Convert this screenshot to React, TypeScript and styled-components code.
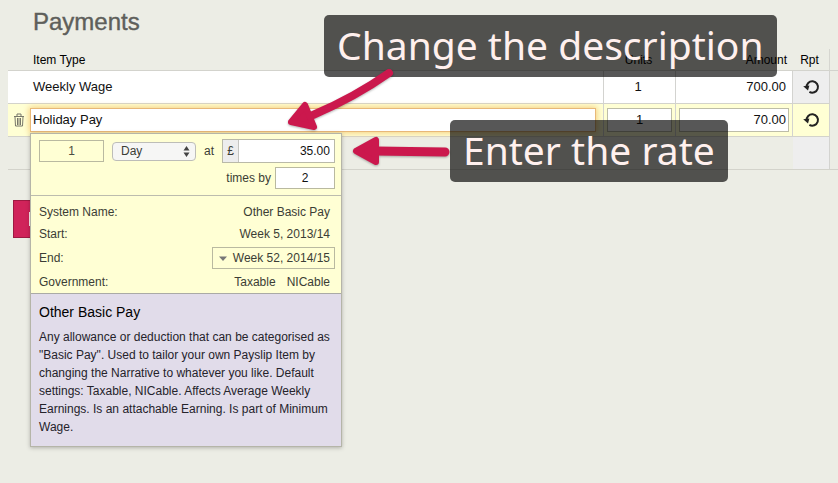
import React from 'react';
import styled, { createGlobalStyle } from 'styled-components';

const Global = createGlobalStyle`
  * { box-sizing: border-box; }
  body { margin: 0; background: #ecede5; color: #222; font-family: "Liberation Sans", Arial, sans-serif; font-size: 12px; }
  button, input, select { font: inherit; color: inherit; }
`;
const Page = styled.main`
  position: relative;
  min-height: 100vh;
  padding: 8px 0 0 8px;
  overflow: hidden;
`;
const Title = styled.h1`
  margin: 0 0 14px 25px;
  font-size: 24px;
  line-height: 27px;
  font-weight: 400;
  color: #5e5f5b;
  -webkit-text-stroke: 0.4px #5e5f5b;
`;
const Table = styled.table`
  width: 100%;
  table-layout: fixed;
  border-collapse: separate;
  border-spacing: 0;
  font-size: 13px;
  color: #111;
`;
const Col = styled.col<{ $w?: number }>`
  width: ${(p) => (p.$w ? `${p.$w}px` : 'auto')};
`;
const Th = styled.th<{ $align?: string; $edge?: boolean }>`
  height: 22px;
  padding: 0 6px 0 3px;
  font-size: 12px;
  font-weight: 400;
  color: #000;
  text-align: ${(p) => p.$align || 'left'};
  border-bottom: 1px solid #d3d3cd;
  border-right: ${(p) => (p.$edge ? '1px solid #d6d6d0' : '0')};
`;
const Row = styled.tr<{ $bg: string }>`
  background: ${(p) => p.$bg};
`;
const Td = styled.td<{ $align?: string; $line?: boolean; $bg?: string; $tight?: boolean }>`
  position: relative;
  height: 33px;
  padding: ${(p) => (p.$tight ? '0 3px' : '0 6px 2px 3px')};
  text-align: ${(p) => p.$align || 'left'};
  background: ${(p) => p.$bg || 'transparent'};
  border-bottom: 1px solid #d3d3cb;
  border-right: ${(p) => (p.$line ? '1px solid #d3d3d0' : '0')};
`;
const Outside = styled(Td)<{ $last?: boolean }>`
  background: #ecede5;
  border-bottom: ${(p) => (p.$last ? '1px solid #d3d3cb' : '0')};
`;
const ItemCell = styled(Td)`
  padding: 0 7px 0 0;
`;
const Field = styled.input<{ $align?: string; $focus?: boolean }>`
  display: block;
  width: 100%;
  height: 24px;
  padding: 0 2px 2px;
  text-align: ${(p) => p.$align || 'left'};
  background: #fff;
  border: 1px solid ${(p) => (p.$focus ? '#e8b878' : '#bdbda8')};
  box-shadow: ${(p) => (p.$focus ? '0 0 6px 1px #f5cf80' : 'none')};
  outline: 0;
`;
const IconButton = styled.button`
  display: flex;
  width: 100%;
  justify-content: center;
  padding: 0;
  border: 0;
  background: none;
`;
const Save = styled.button`
  display: flex;
  align-items: center;
  width: 80px;
  height: 38px;
  margin: 30px 0 0 5px;
  padding: 0 15px;
  border: 1px solid #9d1a42;
  background: #d0235a;
`;
const Panel = styled.section`
  position: absolute;
  top: 100%;
  left: 0;
  z-index: 2;
  width: 312px;
  margin-top: -3px;
  border: 1px solid #b5b5a8;
  background: #ffffd4;
  box-shadow: 0 1px 4px rgba(0, 0, 0, 0.25);
  font-size: 12px;
  color: #3b3d35;
  text-align: left;
`;
const RateForm = styled.div`
  display: flex;
  flex-direction: column;
  gap: 4px;
  padding: 5px 6px 6px 8px;
  border-bottom: 1px solid #bcbcae;
`;
const Line = styled.div<{ $end?: boolean }>`
  display: flex;
  align-items: center;
  justify-content: ${(p) => (p.$end ? 'flex-end' : 'space-between')};
  gap: 4px;
`;
const SmallField = styled.input<{ $w: number; $plain?: boolean }>`
  width: ${(p) => p.$w}px;
  height: 22px;
  padding: 0;
  text-align: center;
  border: 1px solid #b9b9a0;
  background: ${(p) => (p.$plain ? 'transparent' : '#fff')};
  color: ${(p) => (p.$plain ? '#4b4d42' : '#111')};
`;
const SelectBox = styled.div`
  position: relative;
  display: flex;
  width: 84px;
`;
const Select = styled.select`
  width: 100%;
  height: 19px;
  padding: 0 8px;
  appearance: none;
  border: 1px solid #bdbdb8;
  border-radius: 4px;
  background: #f6f6f5;
`;
const Carets = styled.svg`
  position: absolute;
  right: 6px;
  top: 4px;
  pointer-events: none;
`;
const Money = styled.div`
  display: flex;
  width: 113px;
  height: 24px;
  border: 1px solid #b9b9a8;
  background: #fff;
`;
const Currency = styled.span`
  flex: 0 0 16px;
  line-height: 22px;
  text-align: center;
  background: #ededed;
  border-right: 1px solid #c4c4c0;
`;
const MoneyInput = styled.input`
  min-width: 0;
  flex: 1;
  padding: 0 4px;
  border: 0;
  text-align: right;
  color: #111;
`;
const Details = styled.dl`
  margin: 0;
  padding: 5px 6px 0 8px;
  border-bottom: 1px solid #aaaaa6;
`;
const Detail = styled.div<{ $tall?: boolean }>`
  display: flex;
  align-items: center;
  justify-content: space-between;
  height: ${(p) => (p.$tall ? 26 : 22)}px;
`;
const Value = styled.dd`
  display: flex;
  gap: 11px;
  margin: 0;
  padding-right: 5px;
`;
const EndValue = styled.dd`
  margin: 0;
`;
const EndButton = styled.button`
  display: flex;
  align-items: center;
  gap: 6px;
  height: 22px;
  padding: 0 4px 0 6px;
  border: 1px solid #b9b9a0;
  background: transparent;
`;
const About = styled.div`
  padding: 9px 8px 10px;
  background: #e1dcea;
  color: #25232b;
`;
const AboutTitle = styled.h2`
  margin: 0 0 6px;
  font-size: 14px;
  line-height: 19px;
  font-weight: 400;
  color: #000;
`;
const AboutText = styled.p`
  margin: 0;
  line-height: 18px;
`;
const Callout = styled.div<{ $x: number; $y: number }>`
  position: absolute;
  z-index: 4;
  left: ${(p) => p.$x}px;
  top: ${(p) => p.$y}px;
  padding: 0 13px 2px;
  border-radius: 5px;
  background: rgba(0, 0, 0, 0.66);
  color: #fff0ee;
  font-family: "Noto Sans", sans-serif;
  font-size: 39px;
  line-height: 60px;
  white-space: nowrap;
`;
const Arrows = styled.svg`
  position: absolute;
  z-index: 5;
  left: 280px;
  top: 60px;
  pointer-events: none;
  filter: drop-shadow(0 1px 1px rgba(0, 0, 0, 0.3));
`;

const Repeat = () => (
  <svg width="18" height="16" viewBox="0 0 18 16" fill="none" aria-hidden="true">
    <path d="M4.6 8.6A5.7 5.7 0 1 1 7.4 12.9" stroke="#222" strokeWidth="2" />
    <path d="M1.2 7.2L7.4 6.6L6 11.6Z" fill="#222" />
  </svg>
);
const Trash = () => (
  <svg width="12" height="14" viewBox="0 0 12 14" fill="none" stroke="#77776a" aria-hidden="true">
    <path d="M1 3.5H11M4 3V1H8V3M2 4L2.5 13H9.5L10 4M4.5 5V12M6 5V12M7.5 5V12" />
  </svg>
);

export default function App() {
  return (
    <>
      <Global />
      <Page>
        <Title>Payments</Title>
        <Table>
          <colgroup>
            <Col $w={22} />
            <Col />
            <Col $w={72} />
            <Col $w={117} />
            <Col $w={37} />
            <Col $w={8} />
          </colgroup>
          <thead>
            <tr>
              <Th />
              <Th>Item Type</Th>
              <Th $align="center">Units</Th>
              <Th $align="right">Amount</Th>
              <Th $align="center" $edge>Rpt</Th>
              <Th />
            </tr>
          </thead>
          <tbody>
            <Row $bg="#fff">
              <Td />
              <Td $line>Weekly Wage</Td>
              <Td $line $align="center">1</Td>
              <Td $line $align="right">700.00</Td>
              <Td $line $tight $bg="#eeeeee"><IconButton aria-label="Repeat Weekly Wage"><Repeat /></IconButton></Td>
              <Outside />
            </Row>
            <Row $bg="#ffffd4">
              <Td $tight><IconButton aria-label="Delete Holiday Pay"><Trash /></IconButton></Td>
              <ItemCell $line>
                <Field $focus aria-label="Item type" defaultValue="Holiday Pay" />
                <Panel>
                  <RateForm>
                    <Line>
                      <SmallField $w={65} $plain aria-label="Quantity" defaultValue="1" />
                      <SelectBox>
                        <Select aria-label="Period"><option>Day</option></Select>
                        <Carets width="7" height="11" viewBox="0 0 7 11" fill="#444"><path d="M0.5 4.5L3.5 0L6.5 4.5ZM0.5 6.5L3.5 11L6.5 6.5Z" /></Carets>
                      </SelectBox>
                      <label htmlFor="rate">at</label>
                      <Money>
                        <Currency>£</Currency>
                        <MoneyInput id="rate" defaultValue="35.00" />
                      </Money>
                    </Line>
                    <Line $end>
                      <label htmlFor="times">times by</label>
                      <SmallField id="times" $w={60} defaultValue="2" />
                    </Line>
                  </RateForm>
                  <Details>
                    <Detail><dt>System Name:</dt><Value>Other Basic Pay</Value></Detail>
                    <Detail><dt>Start:</dt><Value>Week 5, 2013/14</Value></Detail>
                    <Detail $tall>
                      <dt>End:</dt>
                      <EndValue>
                        <EndButton>
                          <svg width="8" height="5" viewBox="0 0 8 5" fill="#777" aria-hidden="true"><path d="M0 0.5H8L4 5Z" /></svg>
                          Week 52, 2014/15
                        </EndButton>
                      </EndValue>
                    </Detail>
                    <Detail><dt>Government:</dt><Value><span>Taxable</span><span>NICable</span></Value></Detail>
                  </Details>
                  <About>
                    <AboutTitle>Other Basic Pay</AboutTitle>
                    <AboutText>
                      Any allowance or deduction that can be categorised as "Basic Pay". Used to tailor your own
                      Payslip Item by changing the Narrative to whatever you like. Default settings: Taxable, NICable.
                      Affects Average Weekly Earnings. Is an attachable Earning. Is part of Minimum Wage.
                    </AboutText>
                  </About>
                </Panel>
              </ItemCell>
              <Td $line $tight><Field $align="center" aria-label="Units" defaultValue="1" /></Td>
              <Td $line $tight><Field $align="right" aria-label="Amount" defaultValue="70.00" /></Td>
              <Td $line $tight><IconButton aria-label="Repeat Holiday Pay"><Repeat /></IconButton></Td>
              <Outside />
            </Row>
            <Row $bg="transparent">
              <Td /><Td /><Td /><Td /><Td $line $bg="#eeeeee" /><Outside $last />
            </Row>
          </tbody>
        </Table>
        <Save aria-label="Add payment">
          <svg width="14" height="14" viewBox="0 0 14 14" fill="#fff0ee" aria-hidden="true"><rect width="2" height="14" /></svg>
        </Save>
        <Callout $x={324} $y={15}>Change the description</Callout>
        <Callout $x={450} $y={120}>Enter the rate</Callout>
        <Arrows width="180" height="120" viewBox="280 60 180 120" fill="#cb184d" stroke="#cb184d" strokeLinejoin="round" strokeLinecap="round">
          <path d="M389 73Q355 97 313 115" fill="none" strokeWidth="8" />
          <path d="M291 122L305 105L314 127Z" strokeWidth="6" />
          <path d="M445 152L375 151" fill="none" strokeWidth="9" />
          <path d="M356 151L376 140V162Z" strokeWidth="6" />
        </Arrows>
      </Page>
    </>
  );
}
